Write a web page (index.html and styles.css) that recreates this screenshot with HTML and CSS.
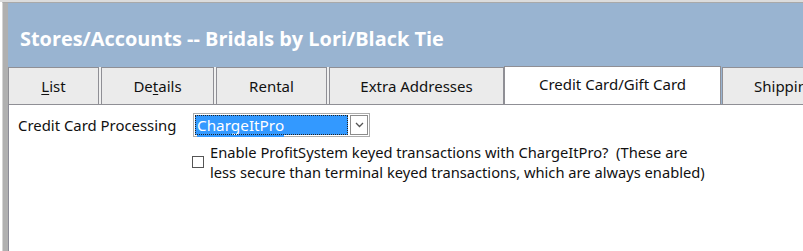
FILE: index.html
```html
<!DOCTYPE html>
<html lang="en">
<head>
    <meta charset="UTF-8">
    <title>Stores/Accounts</title>
    <link rel="stylesheet" href="styles.css">
</head>
<body>
    <div class="window">
        <div class="frame">
            <div class="header">
                <h1 class="title">Stores/Accounts -- Bridals by Lori/Black Tie</h1>
                <div class="tabs">
                    <div class="tab tab-list"><u>L</u>ist</div>
                    <div class="tab tab-details">De<u>t</u>ails</div>
                    <div class="tab tab-rental">Rental</div>
                    <div class="tab tab-extra">Extra Addresses</div>
                    <div class="tab tab-credit active">Credit Card/Gift Card</div>
                    <div class="tab tab-shipping">Shipping</div>
                </div>
            </div>
            <div class="panel">
                <div class="row">
                    <label class="field-label">Credit Card Processing</label>
                    <div class="combo">
                        <div class="combo-value"><span>ChargeItPro</span></div>
                        <div class="combo-button">
                            <svg width="9" height="6" viewBox="0 0 9 6"><path d="M1 1 L4.5 4.5 L8 1" fill="none" stroke="#555" stroke-width="1.3"/></svg>
                        </div>
                    </div>
                </div>
                <div class="check-row">
                    <span class="checkbox"></span>
                    <p class="check-text">Enable ProfitSystem keyed transactions with ChargeItPro?&nbsp; (These are<br>less secure than terminal keyed transactions, which are always enabled)</p>
                </div>
            </div>
        </div>
    </div>
</body>
</html>
```

FILE: styles.css
```css
html, body {
    margin: 0;
    padding: 0;
    height: 100%;
    overflow: hidden;
}
body {
    font-family: "Noto Sans", "Open Sans", sans-serif;
    background-color: white;
    color: #111;
}
.window {
    height: 100%;
    box-sizing: border-box;
    border-top: 2px solid #dcdcdc;
    padding-left: 2px;
}
.frame {
    height: 100%;
    box-sizing: border-box;
    border-top: 1px solid #a9a9a9;
    border-left: 1px solid #d4d4d4;
    background-color: #b0b0b0;
    padding-left: 5px;
    display: flex;
    flex-direction: column;
}
.header {
    background-color: #99b4d1;
    padding-top: 23px;
}
.title {
    margin: 0 0 0 12px;
    height: 40px;
    color: white;
    font-family: "Open Sans", sans-serif;
    font-size: 19.9px;
    font-weight: bold;
    line-height: 25px;
}
.tabs {
    display: flex;
    align-items: flex-end;
    height: 38px;
    white-space: nowrap;
    overflow: hidden;
}
.tab {
    box-sizing: border-box;
    height: 37px;
    border: 1px solid #8f8f95;
    border-bottom: none;
    background-color: #ebebeb;
    box-shadow: 1px 0 0 #f0f0f0, 2px 0 0 #f0f0f0;
    margin-right: 2px;
    text-align: center;
    font-size: 15px;
    line-height: 37px;
    flex-shrink: 0;
}
.tab u {
    text-decoration-thickness: 1px;
    text-underline-offset: 2px;
}
.tab-list { width: 91px; }
.tab-details { width: 113px; }
.tab-rental { width: 111px; }
.tab-extra { width: 175px; margin-right: 0; }
.tab-credit { width: 217px; margin-right: 1px; }
.tab-shipping { width: 120px; text-align: left; padding-left: 31px; }
.tab.active {
    height: 39px;
    background-color: white;
    box-shadow: none;
    line-height: 34px;
    margin-bottom: -1px;
}
.panel {
    flex: 1;
    background-color: white;
    border-top: 1px solid #8f8f95;
    border-left: 1px solid #8a8a96;
    padding: 8px 0 0 9px;
}
.row {
    display: flex;
    align-items: center;
}
.field-label {
    width: 175px;
    font-size: 14.9px;
    line-height: 24px;
}
.combo {
    display: flex;
    box-sizing: border-box;
    width: 177px;
    height: 24px;
    border: 1px solid #acacac;
    padding: 1px;
}
.combo-value {
    flex: 1;
    background-color: #3399ff;
    outline: 1px dotted #222;
    outline-offset: -1px;
    color: white;
    font-size: 15.3px;
    line-height: 20px;
    padding-left: 2px;
    margin-right: 2px;
}
.combo-value span {
    display: inline-block;
    border-bottom: 2px solid #3399ff;
}
.combo-button {
    box-sizing: border-box;
    width: 18px;
    border: 1px solid #8c8c8c;
    display: flex;
    align-items: center;
    justify-content: center;
    background-color: white;
}
.check-row {
    display: flex;
    align-items: flex-start;
    margin: 5px 0 0 174px;
}
.checkbox {
    box-sizing: border-box;
    width: 12px;
    height: 12px;
    border: 1px solid #555;
    margin-top: 14px;
    margin-right: 6px;
    background-color: white;
    flex-shrink: 0;
}
.check-text {
    margin: 0;
    font-size: 14.7px;
    line-height: 20px;
}
```
